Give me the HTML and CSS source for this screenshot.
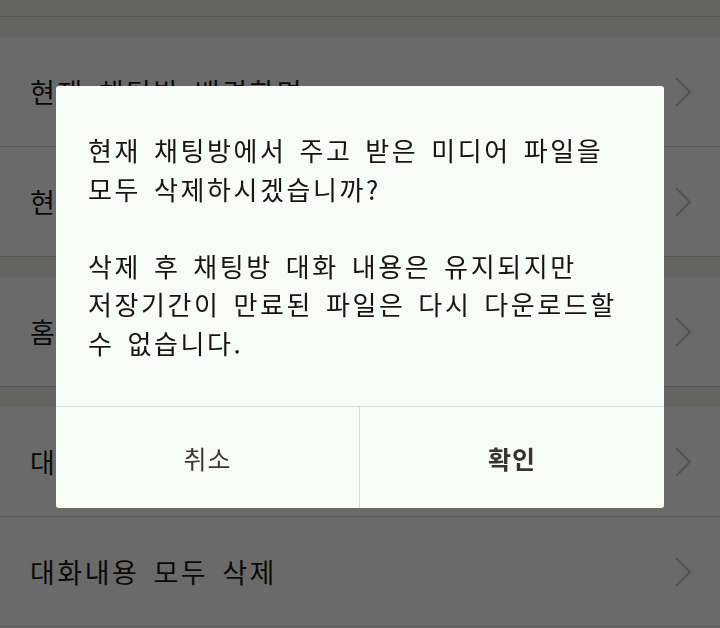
FILE: index.html
```html
<!DOCTYPE html>
<html lang="ko">
<head>
<meta charset="utf-8">
<title>채팅방 설정</title>
<link rel="stylesheet" href="styles.css">
</head>
<body>
<div class="screen">
  <div class="tail"></div>
  <div class="band"></div>
  <section class="group">
    <div class="row"><span class="label">현재 채팅방 배경화면</span><svg class="chev" viewBox="0 0 18 30"><polyline points="2,1 16,15 2,29"/></svg></div>
    <div class="row"><span class="label">현재 채팅방 글자크기</span><svg class="chev" viewBox="0 0 18 30"><polyline points="2,1 16,15 2,29"/></svg></div>
  </section>
  <div class="band"></div>
  <section class="group">
    <div class="row"><span class="label">홈 화면에 바로가기 추가</span><svg class="chev" viewBox="0 0 18 30"><polyline points="2,1 16,15 2,29"/></svg></div>
  </section>
  <div class="band"></div>
  <section class="group">
    <div class="row"><span class="label">대화내용 내보내기</span><svg class="chev" viewBox="0 0 18 30"><polyline points="2,1 16,15 2,29"/></svg></div>
    <div class="row"><span class="label">대화내용 모두 삭제</span><svg class="chev" viewBox="0 0 18 30"><polyline points="2,1 16,15 2,29"/></svg></div>
  </section>
</div>

<div class="overlay">
  <div class="dialog">
    <div class="dialog-body">
      <p>현재 채팅방에서 주고 받은 미디어 파일을 모두 삭제하시겠습니까?</p>
      <p>삭제 후 채팅방 대화 내용은 유지되지만 저장기간이 만료된 파일은 다시 다운로드할 수 없습니다.</p>
    </div>
    <div class="dialog-actions">
      <button class="btn btn-cancel">취소</button>
      <button class="btn btn-ok">확인</button>
    </div>
  </div>
</div>
</body>
</html>
```

FILE: styles.css
```css
html, body {
  margin: 0;
  padding: 0;
}
body {
  width: 720px;
  height: 628px;
  overflow: hidden;
  background: #fafcf9;
  font-family: "Noto Sans CJK KR", "Noto Sans", sans-serif;
}
.screen {
  display: flex;
  flex-direction: column;
}
.tail {
  height: 16px;
  background: #eef0ed;
  border-bottom: 1px solid #d0d2cf;
}
.band {
  height: 20px;
  background: #eef0ed;
}
.group {
  display: flex;
  flex-direction: column;
  background: #fafcf9;
}
.row {
  height: 109px;
  border-bottom: 1px solid #d0d2cf;
  display: flex;
  align-items: center;
  padding: 0 28px 0 30px;
}
.label {
  font-size: 27px;
  letter-spacing: 2.5px;
  word-spacing: 4px;
  color: #1a1a1a;
  white-space: nowrap;
}
.chev {
  margin-left: auto;
  width: 18px;
  height: 30px;
}
.chev polyline {
  fill: none;
  stroke: #c3c5c2;
  stroke-width: 2;
}
.overlay {
  position: fixed;
  inset: 0;
  background: rgba(0, 0, 0, 0.58);
  display: flex;
  justify-content: center;
  align-items: flex-start;
  padding-top: 86px;
}
.dialog {
  width: 608px;
  background: #f7faf5;
  border-radius: 3px;
  overflow: hidden;
}
.dialog-body {
  height: 320px;
  box-sizing: border-box;
  padding: 45px 32px 0 32px;
  font-size: 26px;
  letter-spacing: 2.6px;
  word-spacing: 3px;
  line-height: 38.5px;
  color: #151515;
  word-break: keep-all;
}
.dialog-body p {
  margin: 0;
}
.dialog-body p + p {
  margin-top: 38.5px;
}
.dialog-actions {
  display: grid;
  grid-template-columns: 1fr 1fr;
  border-top: 1px solid #d9ddd7;
}
.btn {
  height: 101px;
  border: 0;
  background: transparent;
  font-family: "Noto Sans CJK KR", "Noto Sans", sans-serif;
  font-size: 25px;
  letter-spacing: 1px;
  color: #3a3a3a;
  padding: 0;
}
.btn-cancel {
  border-right: 1px solid #d9ddd7;
}
.btn-ok {
  font-weight: 700;
  color: #333;
}
```
